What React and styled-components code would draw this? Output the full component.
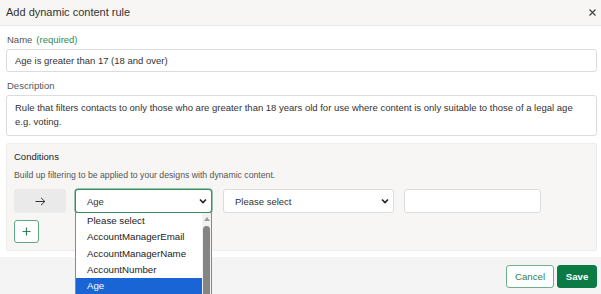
import React from "react";
import styled, { createGlobalStyle } from "styled-components";

const Global = createGlobalStyle`
  html, body { margin: 0; padding: 0; background: #fff; }
  body { font-family: "Liberation Sans", Arial, sans-serif; color: #333; overflow: hidden; }
  * { box-sizing: border-box; }
`;

const Dialog = styled.div`
  width: 601px;
  height: 294px;
  display: flex;
  flex-direction: column;
  background: #fff;
  overflow: hidden;
`;

const Header = styled.div`
  height: 26px;
  flex: none;
  display: flex;
  align-items: center;
  justify-content: space-between;
  padding: 0 5px 1px 6px;
  background: #f7f6f4;
  border-bottom: 1px solid #e9e8e6;
`;

const Title = styled.div`
  font-size: 11px;
  color: #333;
`;

const Close = styled.div`
  display: flex;
  align-items: center;
`;

const Body = styled.div`
  flex: 1;
  padding: 8px 4px 0 6px;
  display: flex;
  flex-direction: column;
`;

const Label = styled.div`
  font-size: 9.5px;
  color: #555;
  line-height: 12px;
  margin-bottom: 3px;
  margin-left: 1px;
`;

const Required = styled.span`
  color: #2e8a52;
  margin-left: 4px;
`;

const TextBox = styled.div`
  height: ${(p) => p.$h}px;
  border: 1px solid #dcdcdc;
  border-radius: 3px;
  padding: ${(p) => p.$pad};
  font-size: 9.5px;
  line-height: 14px;
  color: #333;
  margin-bottom: ${(p) => p.$mb}px;
`;

const Panel = styled.div`
  height: 108px;
  background: #f7f6f4;
  border: 1px solid #eeedeb;
  border-radius: 2px;
  padding: 7px 7px 0 7px;
  display: flex;
  flex-direction: column;
`;

const PanelTitle = styled.div`
  font-size: 9.5px;
  color: #222;
  line-height: 12px;
`;

const PanelHint = styled.div`
  font-size: 8.7px;
  color: #555;
  line-height: 11px;
  margin-top: 7px;
`;

const Row = styled.div`
  display: flex;
  align-items: center;
  margin-top: 8px;
  height: 24px;
`;

const ArrowBox = styled.div`
  width: 52px;
  height: 24px;
  background: #eaeaea;
  border-radius: 3px;
  display: flex;
  align-items: center;
  justify-content: center;
  margin-right: 9px;
`;

const SelectWrap = styled.div`
  position: relative;
  width: ${(p) => p.$w}px;
  margin-right: ${(p) => p.$mr}px;
`;

const Select = styled.div`
  height: 24px;
  border: 1px solid ${(p) => (p.$focus ? "#3d8d62" : "#dcdcdc")};
  box-shadow: ${(p) => (p.$focus ? "0 0 0 0.5px #3d8d62" : "none")};
  border-radius: 3px;
  background: #fff;
  display: flex;
  align-items: center;
  justify-content: space-between;
  padding: 0 4px 0 11px;
  font-size: 9.5px;
  color: #333;
`;

const Input = styled.div`
  width: 137px;
  height: 24px;
  border: 1px solid #dcdcdc;
  border-radius: 3px;
  background: #fff;
`;

const PlusButton = styled.div`
  width: 25px;
  height: 23px;
  margin-top: 7px;
  border: 1px solid #5fa883;
  border-radius: 3px;
  background: #fff;
  display: flex;
  align-items: center;
  justify-content: center;
`;

const Options = styled.div`
  position: absolute;
  left: 0;
  top: 24px;
  width: 137px;
  height: 90px;
  background: #fff;
  border: 1px solid #888;
  border-top: none;
  display: flex;
  z-index: 5;
`;

const OptionList = styled.div`
  flex: 1;
  display: flex;
  flex-direction: column;
`;

const Option = styled.div`
  height: 16.3px;
  line-height: 16.3px;
  padding-left: 11px;
  font-size: 9.7px;
  color: ${(p) => (p.$active ? "#fff" : "#222")};
  background: ${(p) => (p.$active ? "#1a65d6" : "transparent")};
`;

const Scrollbar = styled.div`
  width: 9px;
  background: #f1f1f1;
  display: flex;
  flex-direction: column;
  align-items: center;
`;

const ScrollUp = styled.div`
  height: 12px;
  display: flex;
  align-items: center;
  justify-content: center;
`;

const Thumb = styled.div`
  width: 7px;
  flex: 1;
  background: #858585;
  border-radius: 4px 4px 0 0;
  margin-top: 1px;
`;

const Gap = styled.div`
  height: 6px;
  flex: none;
`;

const Footer = styled.div`
  height: 37px;
  flex: none;
  background: #f4f4f4;
  display: flex;
  justify-content: flex-end;
  align-items: flex-start;
  padding: 8px 4px 0 0;
  gap: 3px;
`;

const Button = styled.div`
  height: 23px;
  width: ${(p) => (p.$primary ? 40 : 48)}px;
  border-radius: 3px;
  display: flex;
  align-items: center;
  justify-content: center;
  font-size: 9.7px;
  border: 1px solid ${(p) => (p.$primary ? "#0c7a45" : "#6fae8d")};
  background: ${(p) => (p.$primary ? "#0c7a45" : "#fff")};
  color: ${(p) => (p.$primary ? "#fff" : "#2f8258")};
  font-weight: ${(p) => (p.$primary ? "bold" : "normal")};
`;

const Chevron = () => (
  <svg width="8" height="6" viewBox="0 0 8 6">
    <path d="M1 1.5 L4 4.5 L7 1.5" fill="none" stroke="#222" strokeWidth="1.6" />
  </svg>
);

const options = ["Please select", "AccountManagerEmail", "AccountManagerName", "AccountNumber", "Age"];

export default function App() {
  return (
    <>
      <Global />
      <Dialog>
        <Header>
          <Title>Add dynamic content rule</Title>
          <Close>
            <svg width="7" height="7" viewBox="0 0 7 7">
              <path d="M0.5 0.5 L6.5 6.5 M6.5 0.5 L0.5 6.5" stroke="#444" strokeWidth="1.2" />
            </svg>
          </Close>
        </Header>
        <Body>
          <Label>
            Name<Required>(required)</Required>
          </Label>
          <TextBox $h={23} $pad="4px 8px" $mb={8}>
            Age is greater than 17 (18 and over)
          </TextBox>
          <Label>Description</Label>
          <TextBox $h={41} $pad="5px 8px" $mb={7}>
            Rule that filters contacts to only those who are greater than 18 years old for use where content is only
            suitable to those of a legal age e.g. voting.
          </TextBox>
          <Panel>
            <PanelTitle>Conditions</PanelTitle>
            <PanelHint>Build up filtering to be applied to your designs with dynamic content.</PanelHint>
            <Row>
              <ArrowBox>
                <svg width="11" height="9" viewBox="0 0 11 9">
                  <path d="M0.5 4.5 H10 M6 0.8 L9.8 4.5 L6 8.2" fill="none" stroke="#333" strokeWidth="1" />
                </svg>
              </ArrowBox>
              <SelectWrap $w={137} $mr={11}>
                <Select $focus>
                  Age
                  <Chevron />
                </Select>
                <Options>
                  <OptionList>
                    {options.map((o) => (
                      <Option key={o} $active={o === "Age"}>
                        {o}
                      </Option>
                    ))}
                  </OptionList>
                  <Scrollbar>
                    <ScrollUp>
                      <svg width="6" height="4" viewBox="0 0 6 4">
                        <path d="M0 4 L3 0 L6 4 Z" fill="#9a9a9a" />
                      </svg>
                    </ScrollUp>
                    <Thumb />
                  </Scrollbar>
                </Options>
              </SelectWrap>
              <SelectWrap $w={171} $mr={10}>
                <Select>
                  Please select
                  <Chevron />
                </Select>
              </SelectWrap>
              <Input />
            </Row>
            <PlusButton>
              <svg width="9" height="9" viewBox="0 0 9 9">
                <path d="M4.5 0.5 V8.5 M0.5 4.5 H8.5" stroke="#2f8258" strokeWidth="1.2" />
              </svg>
            </PlusButton>
          </Panel>
        </Body>
        <Gap />
        <Footer>
          <Button>Cancel</Button>
          <Button $primary>Save</Button>
        </Footer>
      </Dialog>
    </>
  );
}
